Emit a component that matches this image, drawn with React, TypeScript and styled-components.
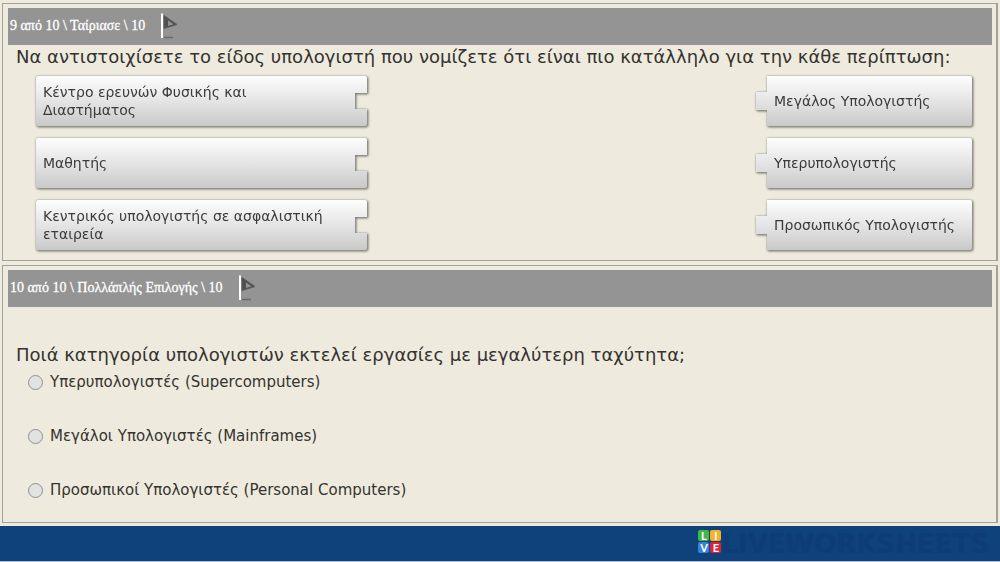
import React from "react";
import styled, { createGlobalStyle } from "styled-components";

const GlobalStyle = createGlobalStyle`
  * { box-sizing: border-box; }
  body {
    margin: 0;
    background: #eeebde;
    color: #35332f;
    font-family: Verdana, "DejaVu Sans", sans-serif;
  }
`;

const Page = styled.div`
  display: flex;
  flex-direction: column;
  min-height: 100vh;
`;

const Questions = styled.main`
  display: flex;
  flex: 1;
  flex-direction: column;
  gap: 4px;
  padding: 3px 2px 3px;
`;

const Panel = styled.section`
  display: flex;
  flex-direction: column;
  min-height: 258px;
  padding: 4px 4px 9px 5px;
  border: 1px solid #a3a298;
  border-right-width: 2px;
`;

const PanelHeader = styled.header`
  display: flex;
  align-items: center;
  gap: 16px;
  height: 37px;
  padding: 0 2px 2px;
  background: #949494;
  color: #fff;
  font: 14px/18px "Liberation Serif", "Times New Roman", serif;
  -webkit-text-stroke: 0.3px #fff;
`;

const FlagSvg = styled.svg`
  display: block;
  width: 18px;
  height: 26px;
`;

const Question = styled.h2<{ $spaced?: boolean }>`
  margin: ${(p) => (p.$spaced ? "36px 0 0" : "0")};
  padding: 0 8px;
  font-size: 18px;
  font-weight: 400;
  line-height: 24px;
`;

const Matches = styled.div`
  display: grid;
  grid-template-columns: minmax(0, 331px) minmax(0, 216px);
  justify-content: space-between;
  gap: 12px;
  padding: 7px 20px 0 28px;
`;

const PieceShadow = styled.div`
  display: grid;
  filter: drop-shadow(1px 1px 1px #7c7c74) drop-shadow(0 0 1px #a2a298);
`;

const Piece = styled.button<{ $side: "left" | "right" }>`
  min-height: 50px;
  padding: ${(p) => (p.$side === "left" ? "6px 32px 6px 7px" : "6px 4px 6px 18px")};
  border: 0;
  border-radius: 2px;
  background: linear-gradient(#fdfdfd, #e2e2e3 55%, #c9c9ca);
  clip-path: ${(p) =>
    p.$side === "left"
      ? "polygon(0 0, 100% 0, 100% 17px, calc(100% - 12px) 17px, calc(100% - 12px) 33px, 100% 33px, 100% 100%, 0 100%)"
      : "polygon(11px 0, 100% 0, 100% 100%, 11px 100%, 11px 34px, 0 34px, 0 16px, 11px 16px)"};
  color: #3b3b3b;
  font: 14px/18px Verdana, "DejaVu Sans", sans-serif;
  text-align: left;
  white-space: ${(p) => (p.$side === "right" ? "nowrap" : "normal")};
`;

const Options = styled.fieldset`
  display: flex;
  flex-direction: column;
  gap: 34px;
  margin: 5px 0 0;
  padding: 0 20px;
  border: 0;
`;

const Option = styled.label`
  display: flex;
  align-items: center;
  gap: 7px;
  font-size: 15px;
  line-height: 20px;
`;

const Radio = styled.input`
  appearance: none;
  width: 15px;
  height: 15px;
  margin: 0;
  border: 1px solid #8f8f8f;
  border-radius: 50%;
  background: #e2e2e1;

  &:checked {
    box-shadow: inset 0 0 0 3px #e2e2e1;
    background: #444;
  }
`;

const Footer = styled.footer`
  display: flex;
  align-items: flex-start;
  justify-content: flex-end;
  height: 36px;
  padding: 3px 11px 0 0;
  border-bottom: 1px solid #b3bccb;
  background: #0f417a;
`;

const Logo = styled.div`
  display: grid;
  grid-template-columns: 11px 11px;
  gap: 1px;
  padding-top: 1px;
`;

const Tile = styled.span<{ $color: string }>`
  height: 11px;
  border-radius: 2px;
  background: ${(p) => p.$color};
  color: #fff;
  font: bold 11px/11px Lato, sans-serif;
  text-align: center;
`;

const Wordmark = styled.span`
  color: #0e3d75;
  font: bold 26px/30px "DejaVu Sans", sans-serif;
`;

const Flag = () => (
  <FlagSvg viewBox="0 0 18 26" aria-hidden="true">
    <path d="M3 24.5H12" stroke="#696969" strokeWidth="1.5" />
    <path d="M3 2.5L16 11.5L3 15.5Z" fill="#505050" stroke="#5c5c5c" />
    <path d="M7 7.5L12.5 11.3L7 13Z" fill="#939393" />
    <path d="M1 0.5V25" stroke="#fff" strokeWidth="2" />
  </FlagSvg>
);

const pairs = [
  ["Κέντρο ερευνών Φυσικής και Διαστήματος", "Μεγάλος Υπολογιστής"],
  ["Μαθητής", "Υπερυπολογιστής"],
  ["Κεντρικός υπολογιστής σε ασφαλιστική εταιρεία", "Προσωπικός Υπολογιστής"],
];

const options = [
  "Υπερυπολογιστές (Supercomputers)",
  "Μεγάλοι Υπολογιστές (Mainframes)",
  "Προσωπικοί Υπολογιστές (Personal Computers)",
];

const tiles = [
  ["L", "#43b649"],
  ["I", "#f3b229"],
  ["V", "#3780dc"],
  ["E", "#df1f3d"],
];

export default function App() {
  return (
    <Page>
      <GlobalStyle />
      <Questions>
        <Panel>
          <PanelHeader>
            <span>9 από 10 \ Ταίριασε \ 10</span>
            <Flag />
          </PanelHeader>
          <Question>
            Να αντιστοιχίσετε το είδος υπολογιστή που νομίζετε ότι είναι πιο κατάλληλο για την κάθε περίπτωση:
          </Question>
          <Matches>
            {pairs.map(([left, right]) => (
              <React.Fragment key={left}>
                <PieceShadow>
                  <Piece type="button" $side="left">{left}</Piece>
                </PieceShadow>
                <PieceShadow>
                  <Piece type="button" $side="right">{right}</Piece>
                </PieceShadow>
              </React.Fragment>
            ))}
          </Matches>
        </Panel>
        <Panel>
          <PanelHeader>
            <span>10 από 10 \ Πολλάπλής Επιλογής \ 10</span>
            <Flag />
          </PanelHeader>
          <Question $spaced id="speed-question">
            Ποιά κατηγορία υπολογιστών εκτελεί εργασίες με μεγαλύτερη ταχύτητα;
          </Question>
          <Options aria-labelledby="speed-question">
            {options.map((text) => (
              <Option key={text}>
                <Radio type="radio" name="speed" value={text} />
                {text}
              </Option>
            ))}
          </Options>
        </Panel>
      </Questions>
      <Footer>
        <Logo>
          {tiles.map(([letter, color]) => (
            <Tile key={letter} $color={color}>{letter}</Tile>
          ))}
        </Logo>
        <Wordmark>LIVEWORKSHEETS</Wordmark>
      </Footer>
    </Page>
  );
}
